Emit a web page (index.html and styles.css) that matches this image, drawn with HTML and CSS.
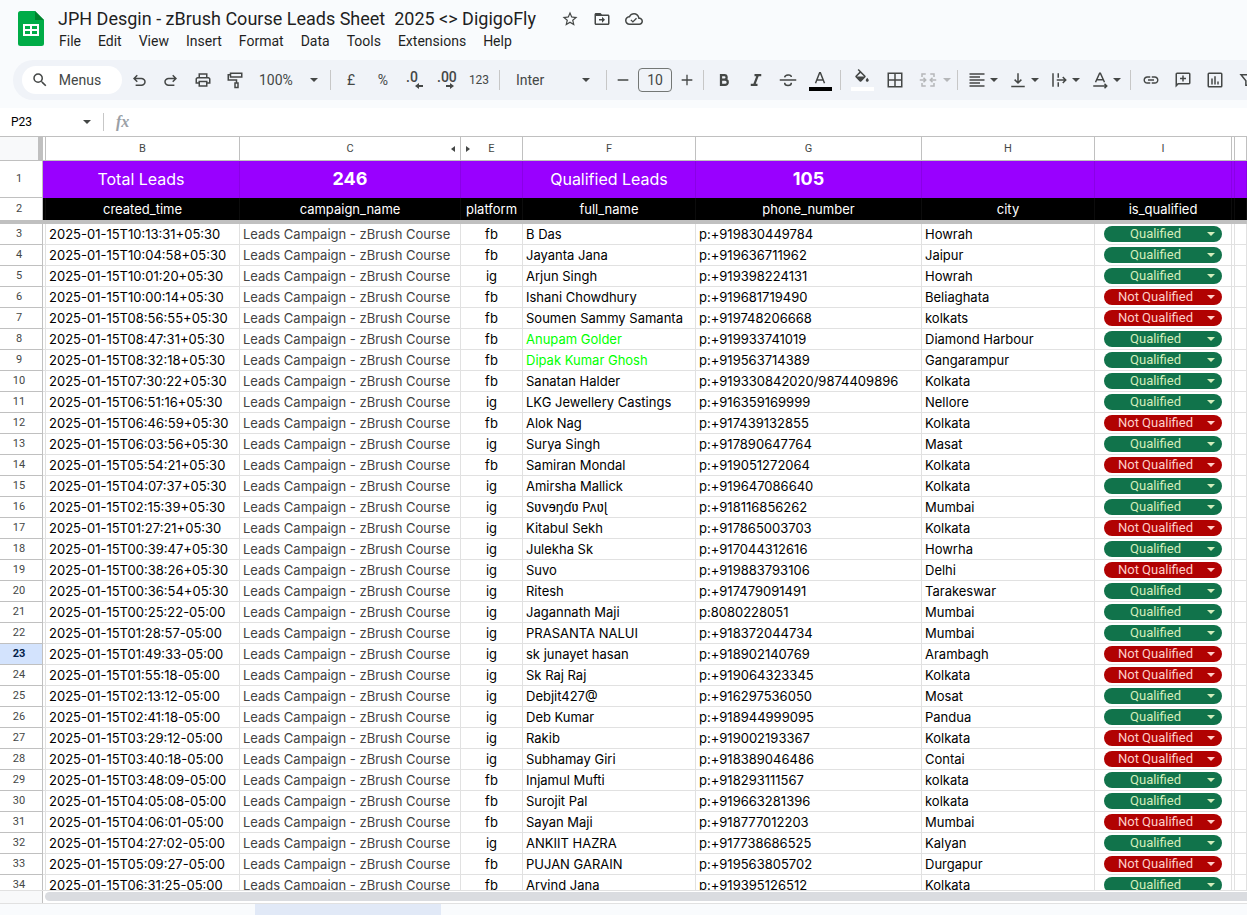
FILE: index.html
```html
<!DOCTYPE html>
<html lang="en">
<head>
    <meta charset="UTF-8">
    <meta name="viewport" content="width=device-width, initial-scale=1.0">
    <title>JPH Desgin - zBrush Course Leads Sheet 2025</title>
    <link rel="stylesheet" href="styles.css">
</head>
<body>
    <!-- Title and menus -->
    <header class="top">
        <svg class="logo" viewBox="0 0 26 35">
            <path d="M2.500 0H17l9 9v23.500a2.500 2.500 0 0 1-2.500 2.500h-21A2.500 2.500 0 0 1 0 32.500v-30A2.500 2.500 0 0 1 2.500 0z" fill="#00ac47"/>
            <path d="M17 0l9 9h-9z" fill="#00832d"/>
            <path d="M5 13h16v12H5zM7 15v3h5v-3zM14 15v3h5v-3zM7 20v3h5v-3zM14 20v3h5v-3z" fill="#fff" fill-rule="evenodd"/>
        </svg>
        <div class="top-main">
            <div class="title-row">
                <h1>JPH Desgin - zBrush Course Leads Sheet&nbsp; 2025 &lt;&gt; DigigoFly</h1>
                <button class="title-btn" aria-label="Star"><svg viewBox="0 0 24 24"><path d="M22 9.240l-7.190-.62L12 2 9.190 8.630 2 9.240l5.460 4.730L5.820 21 12 17.270 18.180 21l-1.630-7.030L22 9.240zM12 15.400l-3.760 2.270 1-4.280-3.320-2.880 4.380-.38L12 6.100l1.710 4.040 4.380.38-3.320 2.880 1 4.280L12 15.400z"/></svg></button>
                <button class="title-btn" aria-label="Move"><svg viewBox="0 0 24 24"><path d="M20 6h-8l-2-2H4c-1.100 0-2 .9-2 2v12c0 1.100.9 2 2 2h16c1.100 0 2-.9 2-2V8c0-1.100-.9-2-2-2zm0 12H4V8h16v10zm-8-1l4-4-4-4v3H8v2h4z"/></svg></button>
                <button class="title-btn" aria-label="Saved to Drive"><svg viewBox="0 0 24 24"><path d="M19.350 10.040C18.670 6.590 15.640 4 12 4 9.110 4 6.600 5.640 5.350 8.040 2.340 8.360 0 10.910 0 14c0 3.310 2.690 6 6 6h13c2.760 0 5-2.240 5-5 0-2.640-2.050-4.780-4.650-4.960zM19 18H6c-2.210 0-4-1.790-4-4 0-2.050 1.530-3.760 3.560-3.970l1.070-.11.5-.95C8.080 7.140 9.940 6 12 6c2.620 0 4.880 1.860 5.390 4.430l.3 1.500 1.530.11c1.560.1 2.780 1.410 2.780 2.960 0 1.650-1.350 3-3 3zm-8.500-3.500l-2-2L7.200 13.800l3.300 3.300 5.500-5.500-1.300-1.300z"/></svg></button>
            </div>
            <nav class="menus">
                <button>File</button>
                <button>Edit</button>
                <button>View</button>
                <button>Insert</button>
                <button>Format</button>
                <button>Data</button>
                <button>Tools</button>
                <button>Extensions</button>
                <button>Help</button>
            </nav>
        </div>
    </header>

    <!-- Toolbar -->
    <div class="toolbar">
        <button class="search"><svg viewBox="0 0 24 24"><path d="M15.500 14h-.79l-.28-.27A6.470 6.470 0 0 0 16 9.500 6.500 6.500 0 1 0 9.500 16c1.610 0 3.090-.59 4.230-1.570l.27.28v.79l5 4.990L20.490 19l-4.990-5zm-6 0C7.010 14 5 11.990 5 9.500S7.010 5 9.500 5 14 7.010 14 9.500 11.990 14 9.500 14z"/></svg>Menus</button>
        <button class="tool" aria-label="Undo"><svg viewBox="0 0 24 24"><path d="M7.500 20v-2h7.600q1.600 0 2.700-1T19 14.500t-1.200-2.500-2.700-1H7.800l2.600 2.600L9 15l-5-5 5-5 1.400 1.400L7.800 9h7.300q2.400 0 4.200 1.600T21 14.500t-1.700 3.900-4.200 1.600z"/></svg></button>
        <button class="tool" aria-label="Redo"><svg viewBox="0 0 24 24"><path d="M16.500 20v-2H8.900q-1.600 0-2.700-1T5 14.500 6.200 12t2.700-1h7.300l-2.600 2.600L15 15l5-5-5-5-1.400 1.400L16.200 9H8.900q-2.400 0-4.200 1.600T3 14.500t1.700 3.900T8.900 20z"/></svg></button>
        <button class="tool" aria-label="Print"><svg viewBox="0 0 24 24"><path d="M19 8h-1V3H6v5H5c-1.660 0-3 1.340-3 3v6h4v4h12v-4h4v-6c0-1.660-1.340-3-3-3zM8 5h8v3H8V5zm8 12v2H8v-4h8v2zm2-2v-2H6v2H4v-4c0-.55.45-1 1-1h14c.55 0 1 .45 1 1v4h-2z"/></svg></button>
        <button class="tool" aria-label="Paint format"><svg class="line" viewBox="0 0 24 24"><path d="M6 3h15v5H6zM6 5H3v7h11v4M12 16h4v6h-4z"/></svg></button>
        <button class="zoom-pick">100%<i class="arrow"></i></button>
        <span class="sep"></span>
        <button class="tool">£</button>
        <button class="tool">%</button>
        <button class="tool decimals" aria-label="Decrease decimal places"><svg viewBox="0 0 22 22"><text x="2" y="13">.0</text><path d="M19 18v-2h-4v-2l-4 3 4 3v-2z"/></svg></button>
        <button class="tool decimals" aria-label="Increase decimal places"><svg viewBox="0 0 22 22"><text x="1" y="13">.00</text><path d="M10 18v-2h4v-2l4 3-4 3v-2z"/></svg></button>
        <button class="tool small">123</button>
        <span class="sep"></span>
        <button class="font-pick">Inter<i class="arrow"></i></button>
        <span class="sep"></span>
        <button class="step" aria-label="Decrease font size"><svg viewBox="0 0 24 24"><path d="M4 11h16v2H4z"/></svg></button>
        <input class="font-size" type="text" value="10" aria-label="Font size">
        <button class="step" aria-label="Increase font size"><svg viewBox="0 0 24 24"><path d="M4 11h7V4h2v7h7v2h-7v7h-2v-7H4z"/></svg></button>
        <span class="sep"></span>
        <button class="tool" aria-label="Bold"><svg class="line heavy" viewBox="0 0 24 24"><path d="M8 5.500h4.500a3 3 0 0 1 0 6H8zM8 11.500h5.500a3.500 3.500 0 0 1 0 7H8z"/></svg></button>
        <button class="tool" aria-label="Italic"><svg class="line heavy" viewBox="0 0 24 24"><path d="M10 5.500h9M5 18.500h9M14.500 5.500l-5 13"/></svg></button>
        <button class="tool" aria-label="Strikethrough"><svg class="line" viewBox="0 0 24 24"><path d="M1 12h22M7.500 8.500C8 5 16 4 16.500 8M7.500 15.500c0 5 9 5 9 0"/></svg></button>
        <button class="tool swatch text-swatch" aria-label="Text colour"><svg class="line" viewBox="0 0 24 24"><path d="M6 19L11.500 5h1L18 19M8 14.500h8"/></svg></button>
        <span class="sep"></span>
        <button class="tool wide swatch" aria-label="Fill colour"><svg viewBox="0 0 24 24"><path d="M16.560 8.940L7.620 0 6.210 1.410l2.380 2.380-5.150 5.150a1.490 1.490 0 0 0 0 2.120l5.500 5.500c.29.29.68.44 1.060.44s.77-.15 1.060-.44l5.500-5.500c.59-.58.59-1.530 0-2.120zM5.210 10L10 5.210 14.790 10H5.210zM19 11.500s-2 2.170-2 3.500c0 1.100.9 2 2 2s2-.9 2-2c0-1.330-2-3.500-2-3.500z"/></svg></button>
        <button class="tool" aria-label="Borders"><svg class="line" viewBox="0 0 24 24"><path d="M3 3h18v18H3zM12 3v18M3 12h18"/></svg></button>
        <button class="drop merge" aria-label="Merge cells" disabled><svg class="line" viewBox="0 0 24 24"><path d="M9 4H4v4M4 16v4h5M15 4h5v4M20 16v4h-5M1 12h8M6 9l3 3-3 3M23 12h-8M18 9l-3 3 3 3"/></svg><i class="arrow"></i></button>
        <span class="sep"></span>
        <button class="drop" aria-label="Horizontal align"><svg viewBox="0 0 24 24"><path d="M2 3h20v2H2zM2 7h14v2H2zM2 11h20v2H2zM2 15h14v2H2zM2 19h20v2H2z"/></svg><i class="arrow"></i></button>
        <button class="drop" aria-label="Vertical align"><svg class="line" viewBox="0 0 24 24"><path d="M3 20.500h18M12 3v13M7.500 11.500L12 16l4.500-4.500"/></svg><i class="arrow"></i></button>
        <button class="drop" aria-label="Text wrapping"><svg class="line" viewBox="0 0 24 24"><path d="M4 3v18M11 3v6M11 15v6M9 12h12M17 8l4 4-4 4"/></svg><i class="arrow"></i></button>
        <button class="drop" aria-label="Text rotation"><svg class="line" viewBox="0 0 24 24"><path d="M6 15L11.500 3h1L18 15M8 11.500h8M3 20h18M18 17l3 3-3 3"/></svg><i class="arrow"></i></button>
        <span class="sep"></span>
        <button class="tool" aria-label="Insert link"><svg viewBox="0 0 24 24"><path d="M3.900 12c0-1.710 1.390-3.100 3.100-3.100h4V7H7c-2.760 0-5 2.240-5 5s2.240 5 5 5h4v-1.900H7c-1.710 0-3.100-1.390-3.100-3.100zM8 13h8v-2H8v2zm9-6h-4v1.900h4c1.710 0 3.100 1.390 3.100 3.100s-1.390 3.100-3.100 3.100h-4V17h4c2.760 0 5-2.240 5-5s-2.240-5-5-5z"/></svg></button>
        <button class="tool" aria-label="Insert comment"><svg viewBox="0 0 24 24"><path d="M2 22V4q0-.8.6-1.400T4 2h16q.8 0 1.400.6T22 4v12q0 .8-.6 1.400T20 18H6zm3.150-6H20V4H4v13.100zM11 14h2v-3h3V9h-3V6h-2v3H8v2h3z"/></svg></button>
        <button class="tool" aria-label="Insert chart"><svg class="line" viewBox="0 0 24 24"><path d="M4 3h16q1 0 1 1v16q0 1-1 1H4q-1 0-1-1V4q0-1 1-1zM8 10v8M12 7v11M16 14v4"/></svg></button>
        <button class="tool" aria-label="Create a filter"><svg class="line" viewBox="0 0 24 24"><path d="M4 5h16l-6.500 8v6h-3v-6z"/></svg></button>
    </div>

    <!-- Name box and formula bar -->
    <div class="formula-bar">
        <input class="name-box" type="text" value="P23" aria-label="Name box">
        <i class="arrow"></i>
        <span class="fx">fx</span>
        <input class="formula" type="text" aria-label="Formula">
    </div>

    <!-- Grid -->
    <main class="grid">
        <table>
            <colgroup>
                <col class="c-num"><col class="c-gap"><col class="c-time"><col class="c-campaign"><col class="c-platform"><col class="c-name"><col class="c-phone"><col class="c-city"><col class="c-status"><col class="c-gap"><col>
            </colgroup>
            <thead>
                <tr class="letters">
                    <th class="corner"></th><th></th><th>B</th><th class="hidden-after">C</th><th class="hidden-before">E</th><th>F</th><th>G</th><th>H</th><th>I</th><th></th><th></th>
                </tr>
                <tr class="totals">
                    <th class="num">1</th><td colspan="2">Total Leads</td><td><b>246</b></td><td></td><td>Qualified Leads</td><td><b>105</b></td><td></td><td></td><td></td><td></td>
                </tr>
                <tr class="fields">
                    <th class="num">2</th><td></td><td>created_time</td><td>campaign_name</td><td>platform</td><td>full_name</td><td>phone_number</td><td>city</td><td>is_qualified</td><td></td><td></td>
                </tr>
                <tr class="freeze"><td colspan="11"></td></tr>
            </thead>
            <tbody id="leads"></tbody>
        </table>
    </main>

    <div class="scroll-row"><div class="corner-foot"></div><div class="thumb"></div></div>
    <footer class="tabs"><div class="tab-active"></div></footer>

    <script src="leads.js"></script>
</body>
</html>
```
FILE: styles.css
```css
* {
    box-sizing: border-box;
}

body {
    margin: 0;
    height: 100vh;
    display: flex;
    flex-direction: column;
    overflow: hidden;
    background-color: #f9fbfd;
    color: #1f1f1f;
    font-family: Roboto, sans-serif;
    font-size: 14px;
}

button, input, select {
    font: inherit;
    color: inherit;
    border: 0;
    margin: 0;
    padding: 0;
    background: none;
}

button {
    flex: none;
    display: flex;
    align-items: center;
    justify-content: center;
}

svg {
    width: 18px;
    height: 18px;
    flex: none;
    fill: currentColor;
}

svg.line {
    fill: none;
    stroke: currentColor;
    stroke-width: 2;
}

svg.heavy {
    stroke-width: 3;
}

/* Small drop-down triangle */
.arrow {
    flex: none;
    border: 4px solid transparent;
    border-top-color: currentColor;
    border-bottom: 0;
}

/* Title and menus */
.top {
    flex: none;
    display: flex;
    height: 60px;
    padding: 6px 0 0 18px;
}

.logo {
    width: 26px;
    height: 35px;
    margin-top: 5px;
}

.top-main {
    padding-left: 7px;
}

.title-row {
    display: flex;
    align-items: center;
    height: 25px;
    padding-left: 7px;
    color: #444746;
}

h1 {
    margin: 0 18px 0 0;
    font-size: 18px;
    font-weight: 400;
    line-height: 24px;
    color: #1f1f1f;
    white-space: nowrap;
}

.title-btn {
    width: 32px;
    height: 24px;
}

.menus {
    display: flex;
    gap: 1px;
}

.menus button {
    height: 20px;
    padding: 0 8px;
}

/* Toolbar */
.toolbar {
    flex: none;
    display: flex;
    align-items: center;
    height: 40px;
    margin: 0 0 8px 13px;
    padding-left: 9px;
    overflow: hidden;
    border-radius: 20px 0 0 20px;
    background-color: #f0f3f8;
    color: #444746;
}

.search {
    width: 100px;
    height: 28px;
    gap: 10px;
    margin-right: 1px;
    padding-right: 12px;
    border-radius: 14px;
    background-color: #fff;
}

.tool {
    width: 32px;
    height: 28px;
}

.small {
    font-size: 12px;
}

.wide {
    width: 34px;
}

.sep {
    flex: none;
    width: 1px;
    height: 20px;
    margin: 0 4px;
    background-color: #c7c7c7;
}

.zoom-pick, .font-pick {
    justify-content: space-between;
    width: 75px;
    height: 28px;
    padding: 0 8px;
}

.font-pick {
    width: 98px;
    padding: 0 12px;
}

.decimals svg {
    width: 22px;
    height: 22px;
    font-size: 14px;
    font-weight: 500;
}

.step {
    width: 24px;
    height: 24px;
}

.step svg {
    width: 16px;
    height: 16px;
}

.font-size {
    flex: none;
    width: 34px;
    height: 24px;
    margin: 0 3px;
    border: 1px solid #747775;
    border-radius: 4px;
    text-align: center;
}

.swatch {
    flex-direction: column;
}

.swatch::after {
    content: "";
    width: 23px;
    height: 4px;
    background-color: #fff;
}

.text-swatch::after {
    background-color: #000;
}

.drop {
    justify-content: flex-start;
    width: 41px;
    height: 28px;
    padding-left: 2px;
}

.drop svg {
    margin: 0 4px;
}

.merge {
    width: 42px;
    color: #b5b7b9;
}

.merge svg {
    margin: 0 6px;
}

/* Name box and formula bar */
.formula-bar {
    flex: none;
    display: flex;
    align-items: center;
    height: 28px;
    background-color: #fff;
    color: #444746;
}

.name-box {
    width: 83px;
    padding-left: 11px;
    font-size: 12px;
    color: #000;
}

.fx {
    height: 18px;
    margin-left: 12px;
    padding-left: 12px;
    border-left: 1px solid #c7c7c7;
    font-family: "Liberation Serif", serif;
    font-size: 16px;
    font-style: italic;
    font-weight: 700;
    line-height: 18px;
    color: #9aa0a6;
}

.formula {
    flex: 1;
    margin-left: 8px;
}

/* Grid */
.grid {
    flex: 1;
    min-height: 0;
    overflow: hidden;
    border-top: 1px solid #c0c0c0;
    border-bottom: 1px solid #e1e1e1;
    background-color: #fff;
}

table {
    width: 100%;
    table-layout: fixed;
    border-collapse: separate;
    border-spacing: 0;
    font-family: Inter, sans-serif;
    font-size: 13px;
    line-height: 20px;
    color: #000;
}

.c-num { width: 43px; }
.c-gap { width: 3px; }
.c-time { width: 194px; }
.c-campaign { width: 221px; }
.c-platform { width: 62px; }
.c-name { width: 173px; }
.c-phone { width: 226px; }
.c-city { width: 173px; }
.c-status { width: 137px; }

th, td {
    height: 21px;
    padding: 0;
    border-right: 1px solid #e1e1e1;
    border-bottom: 1px solid #e1e1e1;
    white-space: nowrap;
}

td {
    padding-left: 3px;
}

td:empty {
    padding: 0;
}

.letters th, .num {
    border-color: #c0c0c0;
    font-family: Roboto, sans-serif;
    font-size: 11px;
    font-weight: 400;
    color: #444746;
}

.letters th {
    position: relative;
    height: 24px;
}

.letters .corner {
    border-right: 5px solid #c0c0c0;
    background-color: #f8f9fa;
}

.num {
    padding-right: 4px;
}

/* Markers for the hidden column D */
.hidden-after::after, .hidden-before::before {
    content: "";
    position: absolute;
    top: 9px;
    border: 3px solid transparent;
}

.hidden-after::after {
    right: 5px;
    border-left: 0;
    border-right: 4px solid #444746;
}

.hidden-before::before {
    left: 5px;
    border-right: 0;
    border-left: 4px solid #444746;
}

.totals th, .totals td {
    height: 37px;
}

.totals td {
    padding: 0 0 2px;
    background-color: #9900ff;
    border-right-color: #8a00e6;
    border-bottom: 0;
    color: #fff;
    font-size: 16px;
    text-align: center;
}

.totals b {
    font-size: 18px;
}

.fields th, .fields td {
    height: 22px;
    border-bottom: 0;
}

.fields td {
    padding: 0;
    background-color: #000;
    border-right-color: #0c0c0c;
    color: #fff;
    text-align: center;
}

/* Bar under the frozen rows */
.freeze td {
    height: 4px;
    border: 0;
    background-color: #c0c0c0;
}

.campaign {
    color: #434343;
}

.platform {
    padding: 0;
    text-align: center;
}

.marked {
    color: #00ff00;
}

.current {
    background-color: #d3e3fd;
    color: #041e49;
    font-weight: 700;
}

/* Status chips */
.status {
    padding: 0 9px;
}

.chip {
    position: relative;
    display: block;
    height: 16px;
    border-radius: 8px;
    background-color: #11734b;
    color: #d4edbc;
}

.chip.no {
    background-color: #b10202;
    color: #ffcfc9;
}

.chip select {
    appearance: none;
    display: block;
    width: 100%;
    height: 16px;
    padding-right: 15px;
    font-family: Roboto, sans-serif;
    line-height: 16px;
    text-align: center;
    text-align-last: center;
}

.chip .arrow {
    position: absolute;
    top: 6px;
    right: 7px;
    pointer-events: none;
}

/* Scrollbar and sheet tabs */
.scroll-row {
    flex: none;
    display: flex;
    gap: 2px;
    height: 13px;
    border-bottom: 1px solid #e1e1e1;
    background-color: #fff;
}

.corner-foot {
    width: 43px;
    border-right: 1px solid #c0c0c0;
    background-color: #f8f9fa;
}

.thumb {
    flex: 1;
    height: 9px;
    margin-top: 1px;
    border-radius: 5px 0 0 5px;
    background-color: #dadce0;
}

.tabs {
    flex: none;
    height: 11px;
    padding-left: 255px;
}

.tab-active {
    width: 186px;
    height: 11px;
    background-color: #e1e9f7;
}
```
FILE: leads.js
```js
// time, platform, name, phone, city, qualified
const leads = [
    ["2025-01-15T10:13:31+05:30", "fb", "B Das", "p:+919830449784", "Howrah", 1],
    ["2025-01-15T10:04:58+05:30", "fb", "Jayanta Jana", "p:+919636711962", "Jaipur", 1],
    ["2025-01-15T10:01:20+05:30", "ig", "Arjun Singh", "p:+919398224131", "Howrah", 1],
    ["2025-01-15T10:00:14+05:30", "fb", "Ishani Chowdhury", "p:+919681719490", "Beliaghata", 0],
    ["2025-01-15T08:56:55+05:30", "fb", "Soumen Sammy Samanta", "p:+919748206668", "kolkats", 0],
    ["2025-01-15T08:47:31+05:30", "fb", "Anupam Golder", "p:+919933741019", "Diamond Harbour", 1],
    ["2025-01-15T08:32:18+05:30", "fb", "Dipak Kumar Ghosh", "p:+919563714389", "Gangarampur", 1],
    ["2025-01-15T07:30:22+05:30", "fb", "Sanatan Halder", "p:+919330842020/9874409896", "Kolkata", 1],
    ["2025-01-15T06:51:16+05:30", "ig", "LKG Jewellery Castings", "p:+916359169999", "Nellore", 1],
    ["2025-01-15T06:46:59+05:30", "fb", "Alok Nag", "p:+917439132855", "Kolkata", 0],
    ["2025-01-15T06:03:56+05:30", "ig", "Surya Singh", "p:+917890647764", "Masat", 1],
    ["2025-01-15T05:54:21+05:30", "fb", "Samiran Mondal", "p:+919051272064", "Kolkata", 0],
    ["2025-01-15T04:07:37+05:30", "ig", "Amirsha Mallick", "p:+919647086640", "Kolkata", 1],
    ["2025-01-15T02:15:39+05:30", "ig", "Sʋvɘŋɗʋ Pʌʋɭ", "p:+918116856262", "Mumbai", 1],
    ["2025-01-15T01:27:21+05:30", "ig", "Kitabul Sekh", "p:+917865003703", "Kolkata", 0],
    ["2025-01-15T00:39:47+05:30", "ig", "Julekha Sk", "p:+917044312616", "Howrha", 1],
    ["2025-01-15T00:38:26+05:30", "ig", "Suvo", "p:+919883793106", "Delhi", 0],
    ["2025-01-15T00:36:54+05:30", "ig", "Ritesh", "p:+917479091491", "Tarakeswar", 1],
    ["2025-01-15T00:25:22-05:00", "ig", "Jagannath Maji", "p:8080228051", "Mumbai", 1],
    ["2025-01-15T01:28:57-05:00", "ig", "PRASANTA NALUI", "p:+918372044734", "Mumbai", 1],
    ["2025-01-15T01:49:33-05:00", "ig", "sk junayet hasan", "p:+918902140769", "Arambagh", 0],
    ["2025-01-15T01:55:18-05:00", "ig", "Sk Raj Raj", "p:+919064323345", "Kolkata", 0],
    ["2025-01-15T02:13:12-05:00", "ig", "Debjit427@", "p:+916297536050", "Mosat", 1],
    ["2025-01-15T02:41:18-05:00", "ig", "Deb Kumar", "p:+918944999095", "Pandua", 1],
    ["2025-01-15T03:29:12-05:00", "ig", "Rakib", "p:+919002193367", "Kolkata", 0],
    ["2025-01-15T03:40:18-05:00", "ig", "Subhamay Giri", "p:+918389046486", "Contai", 0],
    ["2025-01-15T03:48:09-05:00", "fb", "Injamul Mufti", "p:+918293111567", "kolkata", 1],
    ["2025-01-15T04:05:08-05:00", "fb", "Surojit Pal", "p:+919663281396", "kolkata", 1],
    ["2025-01-15T04:06:01-05:00", "fb", "Sayan Maji", "p:+918777012203", "Mumbai", 0],
    ["2025-01-15T04:27:02-05:00", "ig", "ANKIIT HAZRA", "p:+917738686525", "Kalyan", 1],
    ["2025-01-15T05:09:27-05:00", "fb", "PUJAN GARAIN", "p:+919563805702", "Durgapur", 0],
    ["2025-01-15T06:31:25-05:00", "fb", "Arvind Jana", "p:+919395126512", "Kolkata", 1]
];

const markedRows = [8, 9];
const currentRow = 23;

document.getElementById("leads").innerHTML = leads.map(([time, platform, name, phone, city, ok], i) => {
    const row = i + 3;
    return `<tr>
        <th class="num${row === currentRow ? " current" : ""}">${row}</th>
        <td></td>
        <td>${time}</td>
        <td class="campaign">Leads Campaign - zBrush Course</td>
        <td class="platform">${platform}</td>
        <td${markedRows.includes(row) ? ' class="marked"' : ""}>${name}</td>
        <td>${phone}</td>
        <td>${city}</td>
        <td class="status"><span class="chip${ok ? "" : " no"}"><select aria-label="is_qualified, row ${row}">
            <option${ok ? " selected" : ""}>Qualified</option>
            <option${ok ? "" : " selected"}>Not Qualified</option>
        </select><i class="arrow"></i></span></td>
        <td></td>
        <td></td>
    </tr>`;
}).join("");
```
